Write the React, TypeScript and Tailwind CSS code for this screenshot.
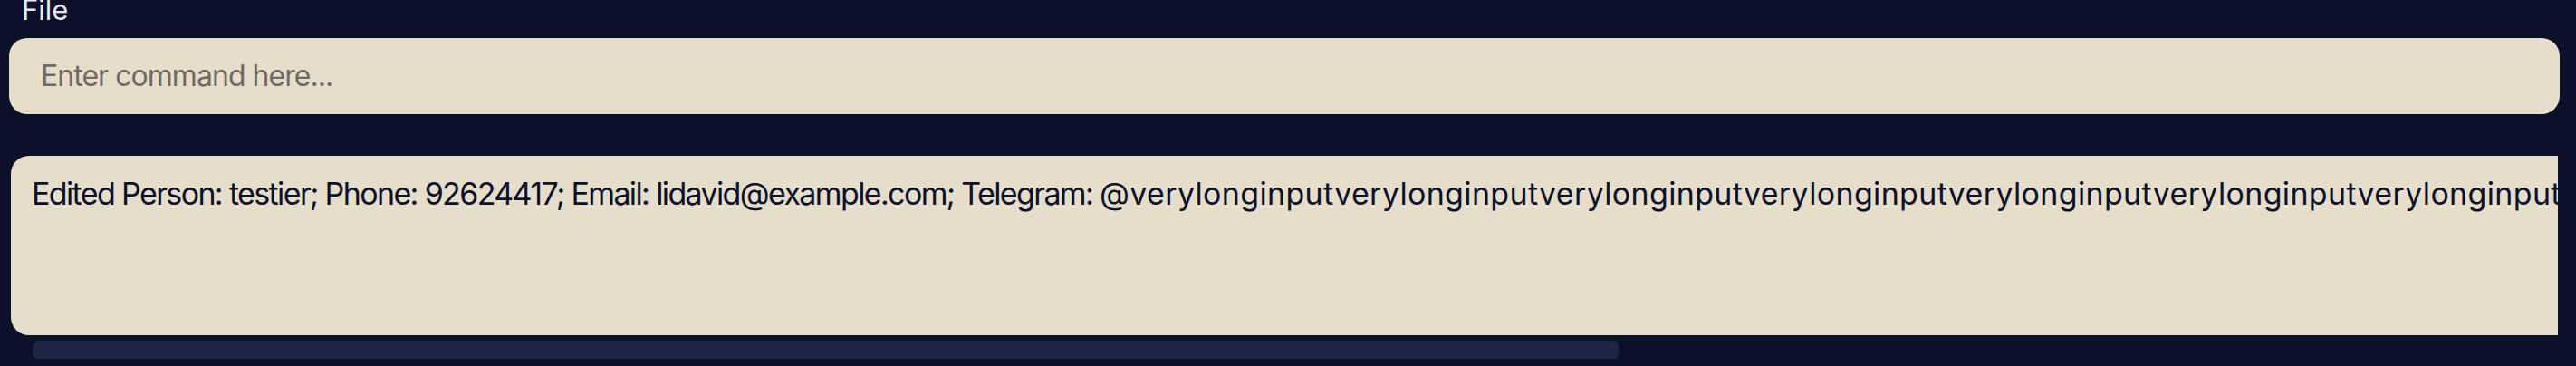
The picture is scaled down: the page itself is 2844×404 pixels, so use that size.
import React from "react";

export default function App() {
  const prefix = "Edited Person: testier; Phone: 92624417; Email: lidavid@example.com; Telegram: ";
  const handle = "@" + "verylonginput".repeat(9);
  return (
    <div className="w-[2844px] h-[404px] bg-[#0a1129] overflow-hidden flex flex-col font-[Inter,sans-serif]">
      <div className="h-[42px] overflow-hidden pl-[24px]">
        <div className="-mt-[7px] text-[31px] leading-[36px] text-[#e8e9ef]">File</div>
      </div>
      <div className="ml-[10px] w-[2816px] h-[84px] rounded-[20px] bg-[#e6ddcb] flex items-center pl-[35px]">
        <span className="text-[32px] text-[#706a66] leading-none tracking-[-0.03em]">Enter command here...</span>
      </div>
      <div className="mt-[46px] ml-[12px] w-[2812px] h-[198px] rounded-l-[20px] bg-[#e6ddcb] overflow-hidden">
        <div className="pl-[23px] pt-[22px] whitespace-nowrap text-[34px] leading-[40px] text-[#0b1229]">
          <span className="tracking-[-0.048em]">{prefix}</span>
          <span className="tracking-[0.01em]">{handle}</span>
        </div>
      </div>
      <div className="mt-[6px] ml-[36px] w-[1751px] h-[20px] rounded-[6px] bg-[#1e2444]" />
    </div>
  );
}
